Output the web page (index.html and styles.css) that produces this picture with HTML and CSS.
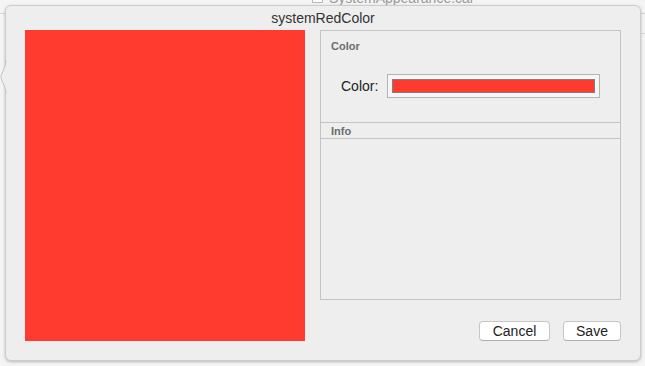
FILE: index.html
```html
<!DOCTYPE html>
<html lang="en">
<head>
  <meta charset="UTF-8">
  <title>systemRedColor</title>
  <link rel="stylesheet" href="styles.css">
</head>
<body>
  <!-- Окно за поповером -->
  <div class="backdrop">
    <div class="file-row">
      <svg class="file-icon" width="11" height="8" viewBox="0 0 11 8">
        <path d="M0.5 -4 V6.5 H10.5 V-4" fill="#fff" stroke="#b4b4b4"/>
      </svg>
      <span>SystemAppearance.car</span>
    </div>
    <div class="line line-top"></div>
    <div class="line line-second"></div>
  </div>

  <!-- Поповер -->
  <div class="popover">
    <svg class="arrow" width="7" height="34" viewBox="0 0 7 34">
      <path d="M6 0 C6 8 1 13 1 17 C1 21 6 26 6 34" fill="#eeeeee" stroke="#c4c4c4"/>
    </svg>
    <div class="title">systemRedColor</div>
    <div class="content">
      <div class="preview"></div>
      <div class="side">
        <div class="panel">
          <div class="section">
            <div class="section-head">Color</div>
            <div class="field">
              <label>Color:</label>
              <div class="well"><div class="swatch"></div></div>
            </div>
          </div>
          <div class="info-head">Info</div>
          <div class="info-body"></div>
        </div>
        <div class="buttons">
          <button class="btn btn-cancel">Cancel</button>
          <button class="btn btn-save">Save</button>
        </div>
      </div>
    </div>
  </div>
</body>
</html>
```

FILE: styles.css
```css
/* Основные стили */
* {
  margin: 0;
  padding: 0;
  box-sizing: border-box;
}

body {
  font-family: 'Liberation Sans', Arial, sans-serif;
  background: #f4f4f4;
  color: #222;
  width: 645px;
  height: 366px;
  padding: 5px 4px 5px 5px;
  position: relative;
  overflow: hidden;
}

/* Окно за поповером */
.backdrop {
  position: absolute;
  top: 0;
  left: 0;
  width: 100%;
  height: 100%;
  z-index: 0;
}

.file-row {
  position: absolute;
  top: -10px;
  left: 312px;
  display: flex;
  align-items: flex-end;
  gap: 6px;
  font-size: 14px;
  line-height: 16px;
  color: #9a9a9a;
}

.file-icon {
  margin-bottom: 2px;
}

.line {
  position: absolute;
  height: 1px;
  background: #d6d6d6;
}

.line-top {
  top: 13px;
  left: 0;
  width: 100%;
}

.line-second {
  top: 33px;
  right: 0;
  width: 20px;
}

/* Поповер */
.popover {
  position: relative;
  z-index: 1;
  width: 636px;
  height: 356px;
  background: #eeeeee;
  border: 1px solid #cdcdcd;
  border-radius: 6px;
  box-shadow: 0 1px 3px rgba(0, 0, 0, 0.25);
}

.arrow {
  position: absolute;
  left: -6px;
  top: 54px;
}

.title {
  text-align: center;
  font-size: 14px;
  line-height: 16px;
  padding: 4px 0;
  color: #333;
}

.content {
  display: flex;
  gap: 15px;
  padding: 0 19px 19px;
}

.preview {
  width: 280px;
  height: 311px;
  background: #ff3b30;
}

.side {
  width: 301px;
  display: flex;
  flex-direction: column;
}

.panel {
  flex: 1;
  border: 1px solid #c4c4c4;
  display: flex;
  flex-direction: column;
}

.section {
  height: 91px;
  padding: 9px 10px 0;
}

.section-head,
.info-head {
  font-size: 11px;
  font-weight: bold;
  color: #6d6d6d;
  line-height: 13px;
}

.field {
  display: flex;
  align-items: center;
  gap: 9px;
  margin: 21px 0 0 10px;
}

.field label {
  font-size: 14px;
  color: #222;
}

.well {
  width: 213px;
  height: 24px;
  padding: 4px;
  border: 1px solid #b4b4b4;
  background: #f6f6f6;
}

.swatch {
  height: 100%;
  background: #ff3b30;
  border: 1px solid #808080;
}

.info-head {
  height: 17px;
  line-height: 14px;
  padding: 1px 10px 0;
  border-top: 1px solid #c4c4c4;
  border-bottom: 1px solid #c4c4c4;
}

.info-body {
  flex: 1;
}

/* Кнопки */
.buttons {
  display: flex;
  justify-content: flex-end;
  gap: 13px;
  margin-top: 21px;
}

.btn {
  height: 20px;
  font-family: inherit;
  font-size: 14px;
  color: #222;
  background: #fff;
  border: 1px solid #c6c6c6;
  border-bottom-color: #adadad;
  border-radius: 4px;
}

.btn-cancel {
  width: 71px;
}

.btn-save {
  width: 58px;
}
```
